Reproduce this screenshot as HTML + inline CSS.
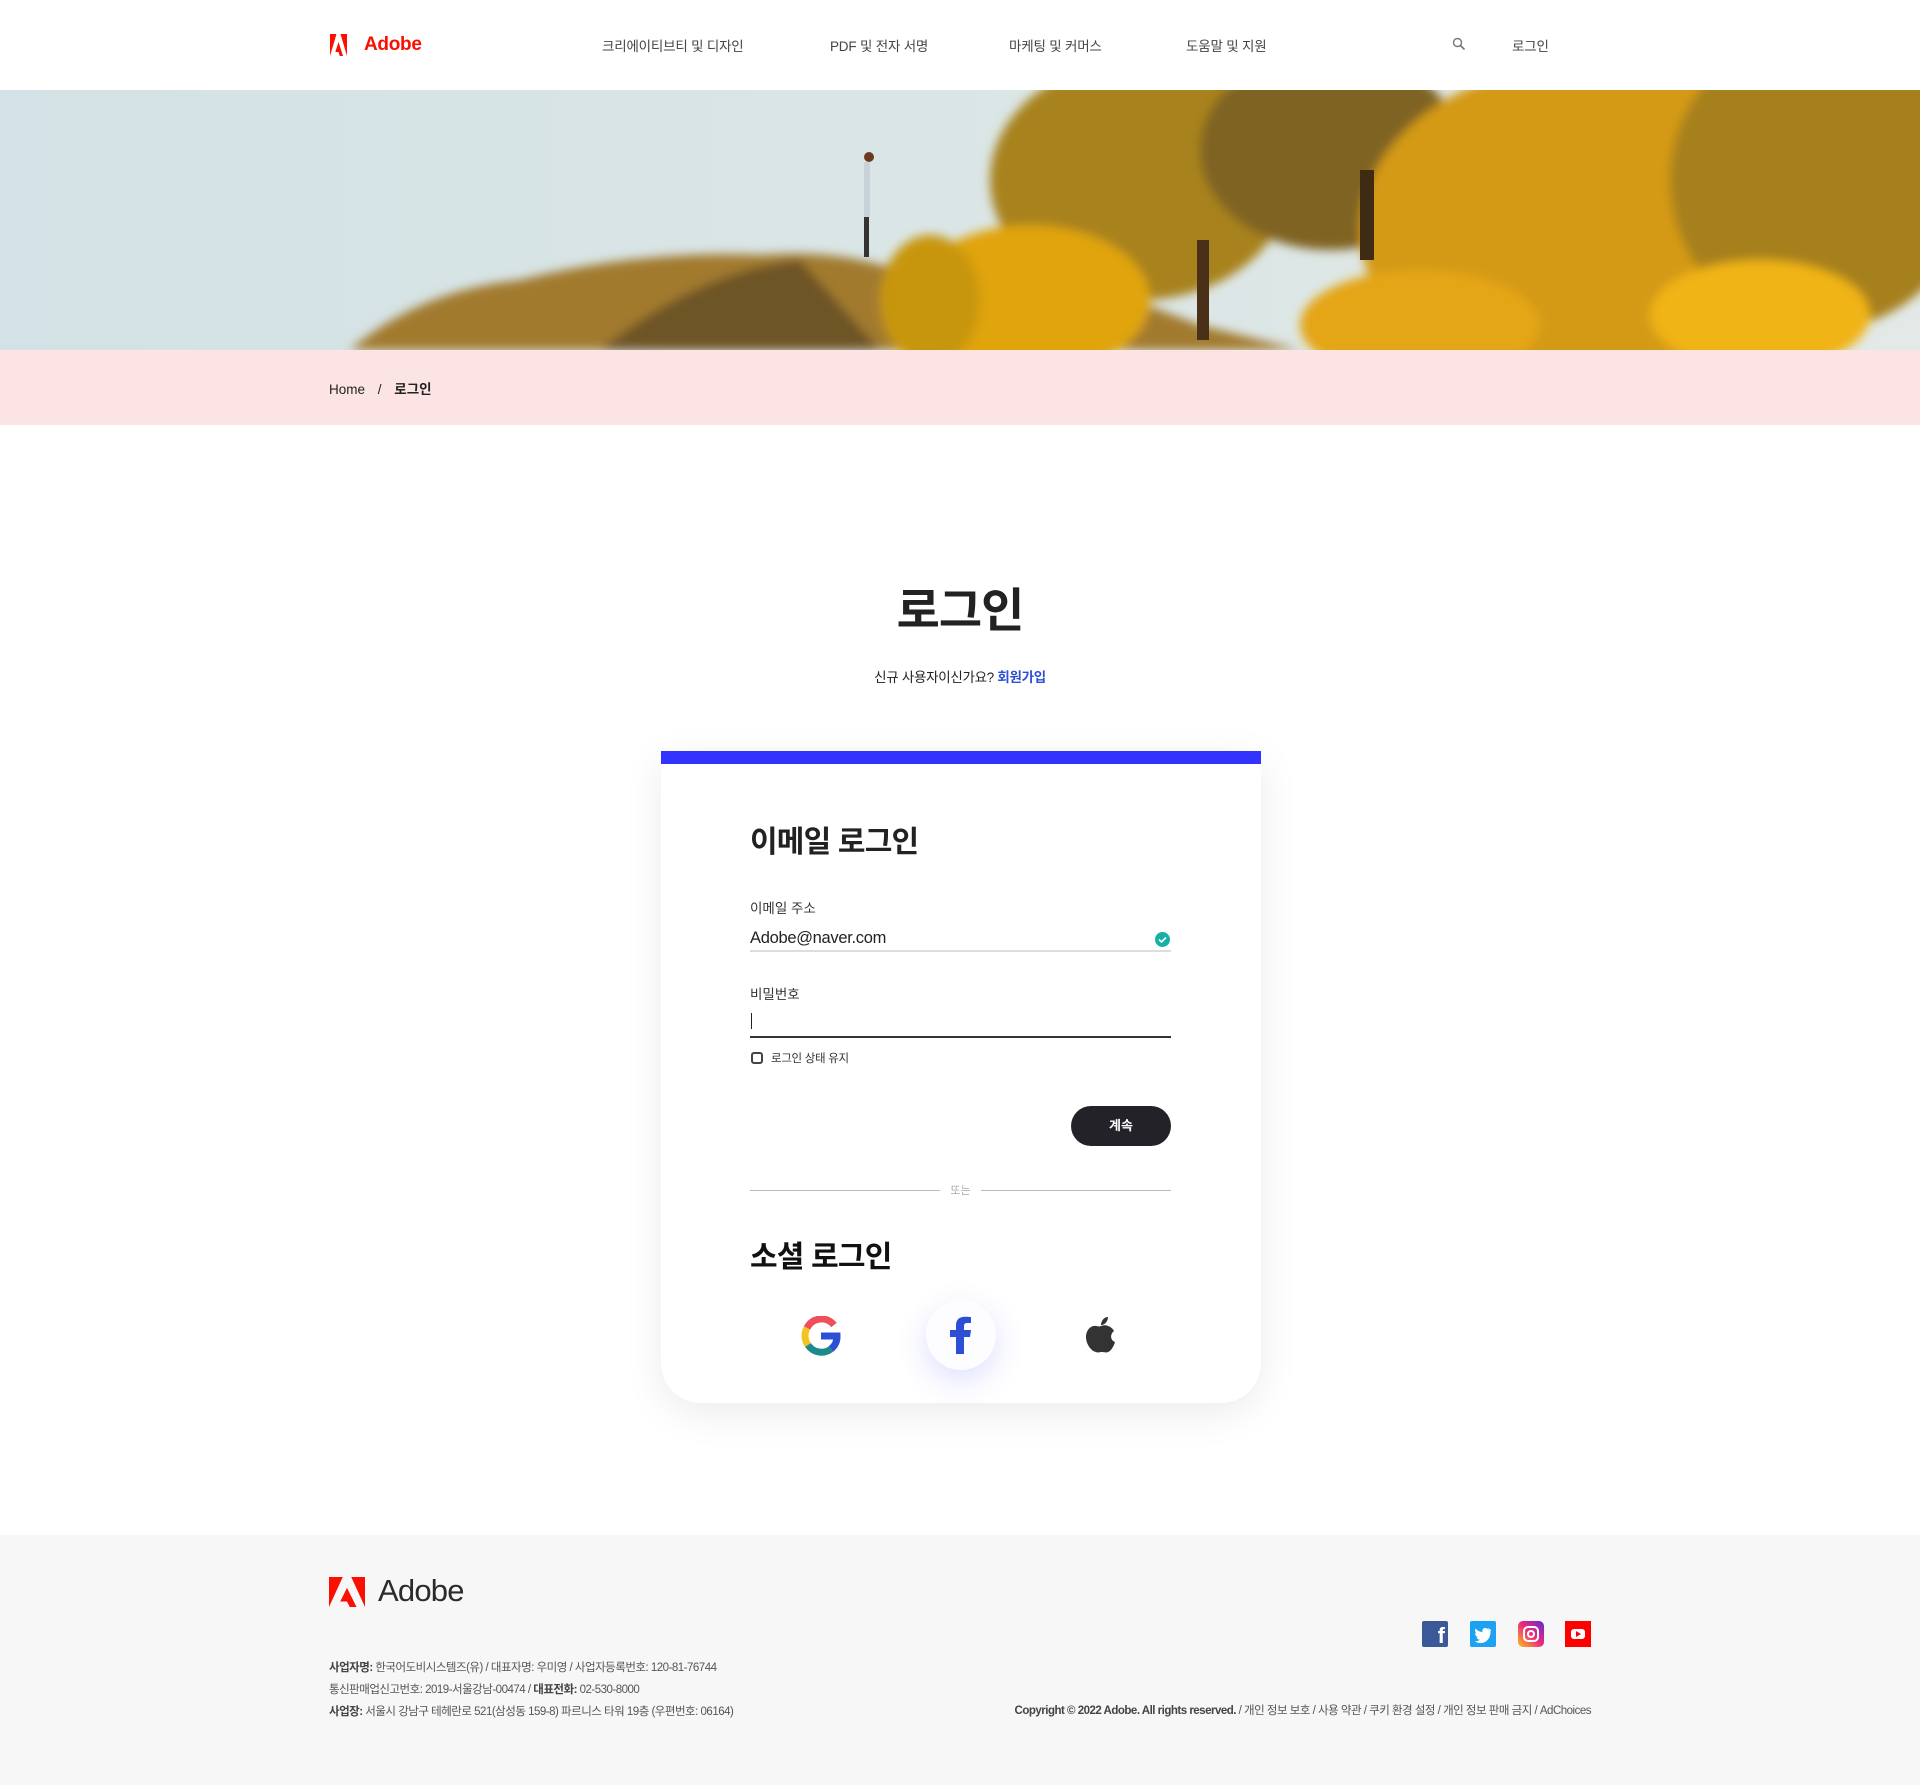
<!DOCTYPE html>
<html><head><meta charset="utf-8"><style>
*{margin:0;padding:0;box-sizing:border-box}
body{width:1920px;height:1785px;position:relative;background:#fff;font-family:"Liberation Sans","Noto Sans CJK KR",sans-serif;color:#222;overflow:hidden}
.abs{position:absolute}
.nav{font-size:13.5px;color:#444;top:35px;letter-spacing:-.2px}
.card{left:661px;top:751px;width:600px;height:652px;background:#fff;border-radius:0 0 40px 40px;box-shadow:0 10px 40px rgba(0,0,0,.08)}
.ft{font-size:11.5px;color:#555;letter-spacing:-.5px}
.ft b{color:#444}
</style></head><body>
<!-- header -->
<svg class="abs" style="left:330px;top:34px" width="17" height="22" viewBox="0 0 17 22"><path d="M0 0h6.5L0 22z M10.5 0h6.5v22z M8.5 8l4.5 14h-3.2l-1.3-4H5.3z" fill="#fa0f00"/></svg>
<div class="abs" style="left:364px;top:34px;font-size:19px;font-weight:bold;color:#fa0f00;letter-spacing:-.3px">Adobe</div>
<div class="abs nav" style="left:602px">크리에이티브티 및 디자인</div>
<div class="abs nav" style="left:830px">PDF 및 전자 서명</div>
<div class="abs nav" style="left:1009px">마케팅 및 커머스</div>
<div class="abs nav" style="left:1186px">도움말 및 지원</div>
<svg class="abs" style="left:1452px;top:37px" width="14" height="14" viewBox="0 0 14 14"><circle cx="5.5" cy="5.5" r="4" fill="none" stroke="#777" stroke-width="1.4"/><path d="M8.5 8.5l4 4" stroke="#777" stroke-width="1.6"/></svg>
<div class="abs nav" style="left:1512px">로그인</div>
<!-- hero -->
<svg class="abs" style="left:0;top:90px" width="1920" height="260" viewBox="0 0 1920 260">
<defs><linearGradient id="sk" x1="0" x2="1"><stop offset="0" stop-color="#d3e2e6"/><stop offset="1" stop-color="#e2e9e6"/></linearGradient>
<filter id="bl"><feGaussianBlur stdDeviation="5"/></filter></defs>
<rect width="1920" height="260" fill="url(#sk)"/>
<g filter="url(#bl)">
<path d="M350 260 Q420 200 520 190 Q640 160 760 165 Q830 160 880 175 Q1000 185 1120 205 L1200 235 L1300 260z" fill="#a27a2e"/>
<path d="M600 260 Q700 180 800 170 L880 260z" fill="#6e5428"/>
<ellipse cx="1140" cy="90" rx="150" ry="120" fill="#a8821c"/>
<ellipse cx="1030" cy="210" rx="120" ry="75" fill="#e0a410"/>
<ellipse cx="1330" cy="60" rx="130" ry="100" fill="#7f6420"/>
<ellipse cx="1600" cy="140" rx="240" ry="170" fill="#d49a12"/>
<ellipse cx="1820" cy="90" rx="150" ry="150" fill="#a6801a"/>
<ellipse cx="1420" cy="235" rx="120" ry="55" fill="#e4a614"/>
<ellipse cx="1760" cy="225" rx="110" ry="55" fill="#f0b414"/>
<ellipse cx="930" cy="210" rx="50" ry="65" fill="#c8960f"/>
</g>
<rect x="1197" y="150" width="12" height="100" fill="#4a3018"/>
<rect x="1360" y="80" width="14" height="90" fill="#3f2a14"/>
<rect x="864" y="72" width="6" height="55" fill="#c9d2d8"/>
<rect x="864" y="127" width="5" height="40" fill="#333"/>
<circle cx="869" cy="67" r="5" fill="#6b3a20"/>
</svg>
<!-- breadcrumb -->
<div class="abs" style="left:0;top:350px;width:1920px;height:75px;background:#fce4e4"></div>
<div class="abs" style="left:329px;top:378px;font-size:13.5px;color:#222">Home <span style="margin:0 9px">/</span> <b>로그인</b></div>
<!-- title -->
<div class="abs" style="left:0;width:1920px;top:572px;text-align:center;font-size:47px;font-weight:bold;color:#222;letter-spacing:-1px">로그인</div>
<div class="abs" style="left:0;width:1920px;top:666px;text-align:center;font-size:13.5px;color:#222;letter-spacing:-.3px">신규 사용자이신가요? <b style="color:#2f4fd6">회원가입</b></div>
<!-- card -->
<div class="abs card"></div>
<div class="abs" style="left:661px;top:751px;width:600px;height:13px;background:#3333ff"></div>
<div class="abs" style="left:750px;top:817px;font-size:30px;font-weight:bold;color:#222;letter-spacing:-.8px">이메일 로그인</div>
<div class="abs" style="left:750px;top:897px;font-size:13.5px;color:#333">이메일 주소</div>
<div class="abs" style="left:750px;top:929px;font-size:16.5px;color:#222;letter-spacing:-.3px">Adobe@naver.com</div>
<svg class="abs" style="left:1155px;top:932px" width="15" height="15" viewBox="0 0 15 15"><circle cx="7.5" cy="7.5" r="7.5" fill="#16b0a4"/><path d="M4 7.5l2.5 2.5 4.5-4.5" fill="none" stroke="#fff" stroke-width="1.6"/></svg>
<div class="abs" style="left:750px;top:950px;width:421px;height:2px;background:#ddd"></div>
<div class="abs" style="left:750px;top:983px;font-size:13.5px;color:#333">비밀번호</div>
<div class="abs" style="left:751px;top:1013px;width:1px;height:16px;background:#222"></div>
<div class="abs" style="left:750px;top:1036px;width:421px;height:2px;background:#333"></div>
<div class="abs" style="left:751px;top:1052px;width:12px;height:12px;border:2px solid #444;border-radius:3px"></div>
<div class="abs" style="left:771px;top:1050px;font-size:11.5px;color:#333;letter-spacing:-.3px">로그인 상태 유지</div>
<div class="abs" style="left:1071px;top:1106px;width:100px;height:40px;border-radius:20px;background:#222228;color:#fff;font-size:13px;font-weight:bold;text-align:center;line-height:40px">계속</div>
<div class="abs" style="left:750px;top:1190px;width:190px;height:1px;background:#bbb"></div>
<div class="abs" style="left:981px;top:1190px;width:190px;height:1px;background:#bbb"></div>
<div class="abs" style="left:940px;top:1182px;width:41px;text-align:center;font-size:11px;color:#aaa">또는</div>
<div class="abs" style="left:750px;top:1232px;font-size:30px;font-weight:bold;color:#111;letter-spacing:-.8px">소셜 로그인</div>
<svg class="abs" style="left:801px;top:1316px" width="40" height="40" viewBox="0 0 40 40"><g fill="none" stroke-width="7"><path d="M33 9A16 16 0 0 0 6 12" stroke="#f04e5a"/><path d="M6 12A16 16 0 0 0 7 29" stroke="#f2c41d"/><path d="M7 29A16 16 0 0 0 30 33" stroke="#1a8a8a"/><path d="M30 33A16 16 0 0 0 36 20H20" stroke="#2d4fd6"/></g></svg>
<div class="abs" style="left:926px;top:1300px;width:70px;height:70px;border-radius:50%;background:#fdfdff;box-shadow:0 10px 30px rgba(80,80,255,.18)"></div>
<svg class="abs" style="left:949px;top:1316px" width="24" height="38" viewBox="0 0 24 38"><path d="M15 38V21h6l1-7h-7V10c0-2 1-3 3-3h4V1c-1 0-3-.3-6-.3C10 .7 7 4 7 9v5H1v7h6v17z" fill="#2d4fd6"/></svg>
<svg class="abs" style="left:1085px;top:1316px" width="32" height="38" viewBox="0 0 32 38"><path d="M16 10c3-1 5-1 7 0 3 1 5 3 6 5-4 3-4 9 1 11-1 4-4 9-7 10-2 1-3 0-6 0s-4 1-6 0C6 35 1 28 1 21 1 14 6 9 11 10c2 0 3 1 5 0z" fill="#333"/><path d="M16 9c0-4 3-8 7-8 0 4-3 8-7 8z" fill="#333"/></svg>
<!-- footer -->
<div class="abs" style="left:0;top:1535px;width:1920px;height:250px;background:#f7f7f7"></div>
<svg class="abs" style="left:329px;top:1577px" width="36" height="30" viewBox="0 0 17 22" preserveAspectRatio="none"><path d="M0 0h6.5L0 22z M10.5 0h6.5v22z M8.5 8l4.5 14h-3.2l-1.3-4H5.3z" fill="#fa0f00"/></svg>
<div class="abs" style="left:378px;top:1573px;font-size:31px;color:#2b2b2b;letter-spacing:-.8px">Adobe</div>
<div class="abs" style="left:1422px;top:1621px;width:26px;height:26px;background:#3b5998;border-radius:2px;color:#fff;font-weight:bold;font-size:22px;text-align:right;padding-right:3px;line-height:30px;overflow:hidden">f</div>
<div class="abs" style="left:1470px;top:1621px;width:26px;height:26px;background:#1da1f2;border-radius:2px"><svg width="26" height="26" viewBox="0 0 26 26"><path d="M20 8c-1 .4-1.5.5-2 .5 .7-.5 1-1 1.3-1.6-.7.4-1.3.6-2 .8C16 6.900 14 6.600 13 8c-.7 1-.8 2-.5 3-3 0-5-1.500-7-3.500-1 2 0 4 1 5-.5 0-1-.2-1.500-.4 0 2 1.500 3.500 3 4-.5.200-1 .200-1.500.100.500 1.500 2 2.500 3.500 2.500C8 20 6 20.500 4.500 20.300 12 25 21 20 20.500 10 21 9.500 21.500 9 20 8z" fill="#fff"/></svg></div>
<div class="abs" style="left:1518px;top:1621px;width:26px;height:26px;background:linear-gradient(45deg,#f9c21b,#ee2a7b,#6228d7);border-radius:5px"><div style="margin:5px;width:16px;height:16px;border:2px solid #fff;border-radius:5px;position:relative"><div style="position:absolute;left:2px;top:2px;width:8px;height:8px;border:2px solid #fff;border-radius:50%"></div></div></div>
<div class="abs" style="left:1565px;top:1621px;width:26px;height:26px;background:#f00"><div style="margin:8px 6px;width:14px;height:10px;background:#fff;border-radius:3px;position:relative"><div style="position:absolute;left:5px;top:2px;border-left:5px solid #f00;border-top:3px solid transparent;border-bottom:3px solid transparent"></div></div></div>
<div class="abs ft" style="left:329px;top:1659px"><b>사업자명:</b> 한국어도비시스템즈(유) / 대표자명: 우미영 / 사업자등록번호: 120-81-76744</div>
<div class="abs ft" style="left:329px;top:1681px">통신판매업신고번호: 2019-서울강남-00474 / <b>대표전화:</b> 02-530-8000</div>
<div class="abs ft" style="left:329px;top:1703px"><b>사업장:</b> 서울시 강남구 테헤란로 521(삼성동 159-8) 파르니스 타워 19층 (우편번호: 06164)</div>
<div class="abs ft" style="right:329px;top:1702px;text-align:right"><b>Copyright © 2022 Adobe. All rights reserved.</b> / 개인 정보 보호 / 사용 약관 / 쿠키 환경 설정 / 개인 정보 판매 금지 / AdChoices</div>
</body></html>
